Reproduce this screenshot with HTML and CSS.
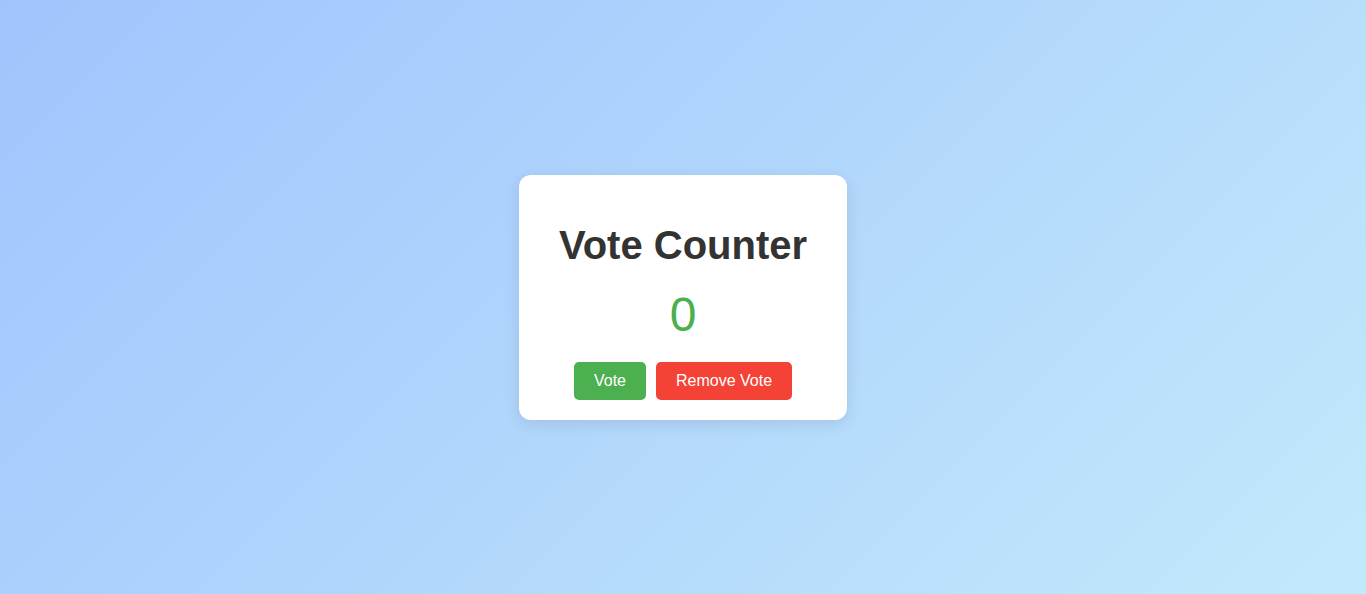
FILE: index.html
```html
<!DOCTYPE html>
<html lang="en">
<head>
<meta charset="utf-8">
<title>Vote Counter</title>
<link rel="stylesheet" href="styles.css">
</head>
<body>
<main class="card">
  <h1 class="title">Vote Counter</h1>
  <div class="count">0</div>
  <div class="actions">
    <button class="btn btn-vote">Vote</button>
    <button class="btn btn-remove">Remove Vote</button>
  </div>
</main>
</body>
</html>
```

FILE: styles.css
```css
html, body {
  margin: 0;
  padding: 0;
  height: 100%;
}
body {
  font-family: "Liberation Sans", Arial, sans-serif;
  background: linear-gradient(135deg, #a1c4fd 0%, #c2e9fb 100%);
  display: flex;
  align-items: center;
  justify-content: center;
  min-height: 100vh;
}
.card {
  background: #fff;
  border-radius: 12px;
  box-shadow: 0 4px 15px rgba(0, 0, 0, 0.1);
  padding: 20px 40px;
  text-align: center;
}
.title {
  margin: 27px 0 19px;
  font-size: 40px;
  line-height: 46px;
  font-weight: bold;
  color: #333;
}
.count {
  font-size: 48px;
  line-height: 55px;
  color: #4caf50;
  margin-bottom: 20px;
}
.actions {
  display: flex;
  justify-content: center;
  gap: 10px;
}
.btn {
  font-family: "Liberation Sans", Arial, sans-serif;
  font-size: 16px;
  line-height: 18px;
  padding: 10px 20px;
  border: none;
  border-radius: 5px;
  color: #fff;
  cursor: pointer;
}
.btn-vote {
  background: #4caf50;
}
.btn-remove {
  background: #f44336;
}
```
